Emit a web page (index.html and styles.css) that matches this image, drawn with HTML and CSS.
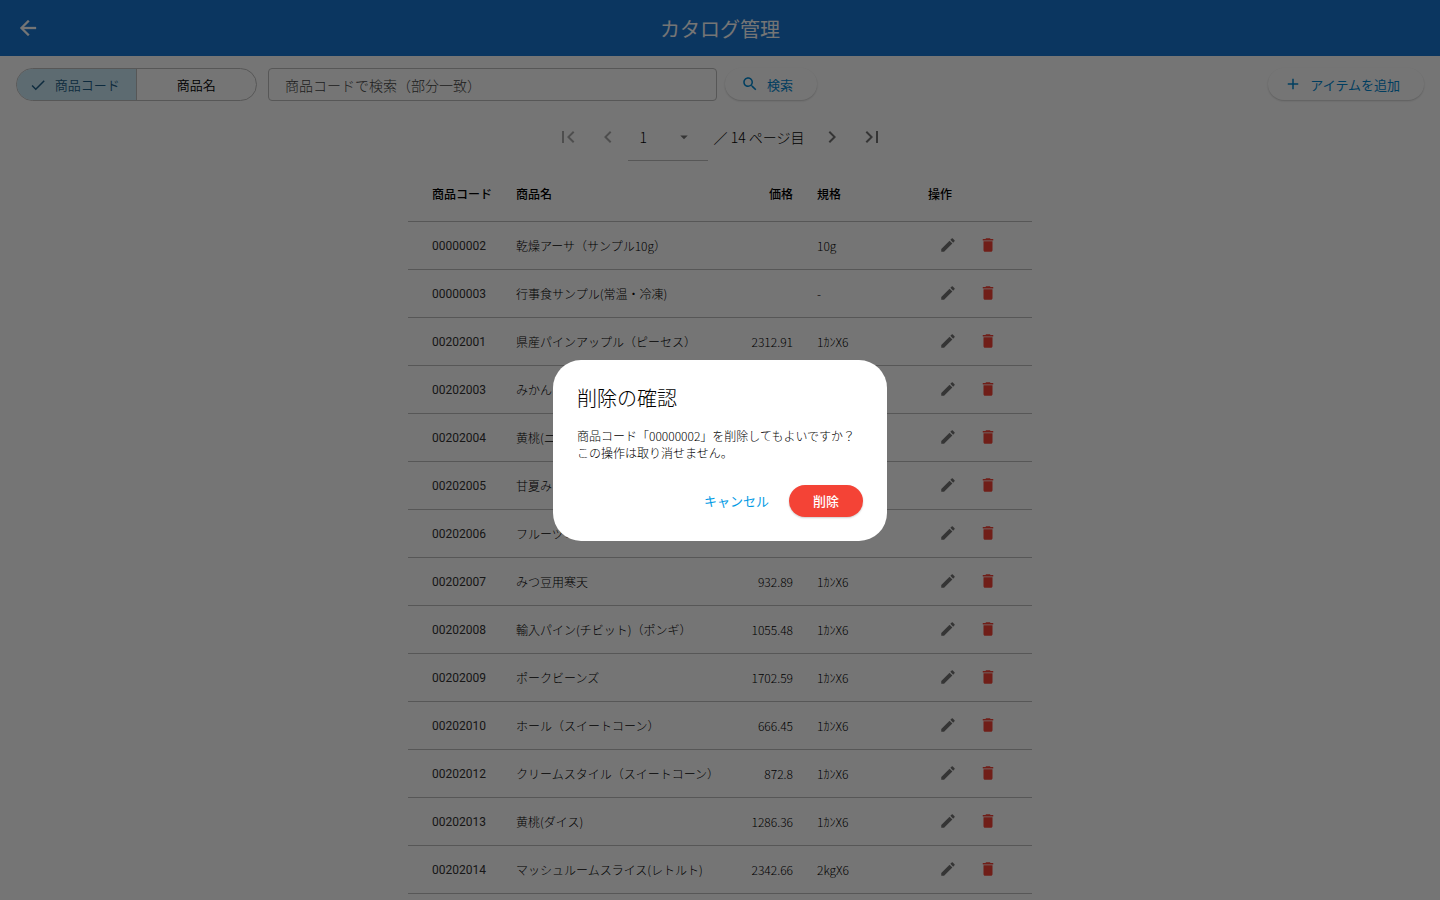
FILE: index.html
```html
<!DOCTYPE html>
<html lang="ja">
<head>
<meta charset="utf-8">
<meta name="viewport" content="width=device-width, initial-scale=1">
<title>カタログ管理</title>
<link rel="stylesheet" href="styles.css">
</head>
<body>
<svg class="sprite" aria-hidden="true">
  <symbol id="back" viewBox="0 0 24 24"><path d="M20 11H7.83l5.59-5.59L12 4l-8 8 8 8 1.41-1.41L7.83 13H20v-2z" stroke="currentColor" stroke-width=".3"/></symbol>
  <symbol id="check" viewBox="0 0 24 24"><path d="M9 16.17 4.83 12l-1.42 1.41L9 19 21 7l-1.41-1.41z"/></symbol>
  <symbol id="search" viewBox="0 0 24 24"><path d="M15.5 14h-.79l-.28-.27C15.41 12.59 16 11.11 16 9.5 16 5.91 13.09 3 9.5 3S3 5.91 3 9.5 5.91 16 9.5 16c1.61 0 3.09-.59 4.23-1.57l.27.28v.79l5 4.99L20.49 19l-4.99-5zm-6 0C7.01 14 5 11.99 5 9.5S7.01 5 9.5 5 14 7.01 14 9.5 11.99 14 9.5 14z"/></symbol>
  <symbol id="add" viewBox="0 0 24 24"><path d="M19 13h-6v6h-2v-6H5v-2h6V5h2v6h6v2z"/></symbol>
  <symbol id="first" viewBox="0 0 24 24"><path d="M18.41 16.59 13.82 12l4.59-4.59L17 6l-6 6 6 6zM6 6h2v12H6z"/></symbol>
  <symbol id="prev" viewBox="0 0 24 24"><path d="M15.41 7.41 14 6l-6 6 6 6 1.41-1.41L10.83 12z"/></symbol>
  <symbol id="next" viewBox="0 0 24 24"><path d="M10 6 8.59 7.41 13.17 12l-4.58 4.59L10 18l6-6z"/></symbol>
  <symbol id="last" viewBox="0 0 24 24"><path d="M5.59 7.41 10.18 12l-4.59 4.59L7 18l6-6-6-6zM16 6h2v12h-2z"/></symbol>
  <symbol id="drop" viewBox="0 0 24 24"><path d="m7 10 5 5 5-5z"/></symbol>
  <symbol id="edit" viewBox="0 0 24 24"><path d="M3 17.25V21h3.75L17.81 9.94l-3.75-3.75L3 17.25zM20.71 7.04c.39-.39.39-1.02 0-1.41l-2.34-2.34c-.39-.39-1.02-.39-1.41 0l-1.83 1.83 3.75 3.75 1.83-1.83z"/></symbol>
  <symbol id="trash" viewBox="0 0 24 24"><path d="M6 19c0 1.1.9 2 2 2h8c1.1 0 2-.9 2-2V7H6v12zM19 4h-3.5l-1-1h-5l-1 1H5v2h14V4z"/></symbol>
</svg>

<div class="page">
  <header class="app-bar">
    <button class="icon-btn back" aria-label="戻る"><svg><use href="#back"/></svg></button>
    <h1>カタログ管理</h1>
  </header>

  <div class="toolbar">
    <div class="segments">
      <button class="segment selected" aria-pressed="true"><svg><use href="#check"/></svg>商品コード</button>
      <button class="segment" aria-pressed="false">商品名</button>
    </div>
    <input class="search-box" type="text" aria-label="検索" placeholder="商品コードで検索（部分一致）">
    <button class="pill"><svg><use href="#search"/></svg>検索</button>
    <button class="pill add"><svg><use href="#add"/></svg>アイテムを追加</button>
  </div>

  <nav class="pager" aria-label="ページ">
    <button class="icon-btn" disabled aria-label="最初のページ"><svg><use href="#first"/></svg></button>
    <button class="icon-btn" disabled aria-label="前のページ"><svg><use href="#prev"/></svg></button>
    <div class="page-select">
      <select aria-label="ページ番号"><option>1</option><option>2</option><option>3</option></select>
      <svg><use href="#drop"/></svg>
    </div>
    <span class="total">／ 14 ページ目</span>
    <button class="icon-btn" aria-label="次のページ"><svg><use href="#next"/></svg></button>
    <button class="icon-btn" aria-label="最後のページ"><svg><use href="#last"/></svg></button>
  </nav>

  <table class="catalog">
    <thead>
      <tr><th class="code">商品コード</th><th class="name">商品名</th><th class="price">価格</th><th class="spec">規格</th><th class="ops">操作</th></tr>
    </thead>
    <tbody id="rows"></tbody>
  </table>
</div>

<div class="scrim">
  <div class="dialog" role="dialog" aria-modal="true" aria-labelledby="dialog-title">
    <h2 id="dialog-title">削除の確認</h2>
    <p>商品コード「00000002」を削除してもよいですか？<br>この操作は取り消せません。</p>
    <div class="actions">
      <button class="cancel">キャンセル</button>
      <button class="danger">削除</button>
    </div>
  </div>
</div>
<script src="app.js"></script>
</body>
</html>
```
FILE: styles.css
```css
* { box-sizing: border-box; }

body {
  margin: 0;
  background: #fff;
  color: #000;
  font: 300 12px/17px "Noto Sans CJK JP", "Noto Sans", sans-serif;
}

button, input, select { font: inherit; color: inherit; }

button {
  display: inline-flex;
  align-items: center;
  justify-content: center;
  padding: 0;
  border: 0;
  background: none;
  cursor: pointer;
}

svg { width: 18px; height: 18px; fill: currentColor; flex: none; }

.sprite { position: absolute; width: 0; height: 0; }

.page { height: 100vh; overflow: hidden; }

.app-bar {
  display: grid;
  grid-template-columns: 56px 1fr 56px;
  align-items: center;
  height: 56px;
  background: #1976d2;
  color: #fff;
}

.app-bar h1 {
  margin: 2px 0 0;
  text-align: center;
  font-size: 20px;
  line-height: 28px;
  font-weight: 400;
}

.icon-btn { width: 40px; height: 40px; color: #757575; }
.icon-btn:disabled { color: #ababab; }
.icon-btn svg { width: 24px; height: 24px; }
.icon-btn.back { color: #fff; margin: 0 auto; }

.toolbar { display: flex; align-items: flex-start; padding: 12px 16px 0; }

.segments {
  display: grid;
  grid-template-columns: 1fr 1fr;
  width: 241px;
  height: 33px;
  margin-right: 11px;
  border: 1px solid #bdbdbd;
  border-radius: 17px;
  overflow: hidden;
}

.segment { gap: 8px; font-size: 13px; font-weight: 350; }
.segment svg { width: 18px; height: 18px; }
.segment.selected {
  padding-right: 4px;
  border-right: 1px solid #bdbdbd;
  background: #cbe9f7;
  color: #1f5f88;
}

.search-box {
  flex: 0 1 449px;
  min-width: 0;
  height: 33px;
  margin-right: 8px;
  padding: 0 16px;
  border: 1px solid #bdbdbd;
  border-radius: 4px;
  background: #fff;
  font-size: 14px;
}
.search-box::placeholder { color: #444; opacity: 1; }

.pill {
  gap: 8px;
  height: 32px;
  padding: 0 24px 0 16px;
  border-radius: 16px;
  background: #fff;
  color: #0288d1;
  font-size: 13px;
  font-weight: 400;
  box-shadow: 0 1px 2px rgba(0, 0, 0, .2);
}
.pill.add { margin-left: auto; }

.pager { display: flex; justify-content: center; align-items: center; margin-top: 12px; height: 48px; }
.pager .icon-btn { height: 48px; }

.page-select { display: flex; align-items: center; position: relative; width: 80px; height: 48px; border-bottom: 1px solid #bdbdbd; }
.page-select select {
  appearance: none;
  width: 100%;
  height: 100%;
  padding: 2px 32px 0 12px;
  border: 0;
  background: none;
  font-size: 14px;
}
.page-select svg { position: absolute; right: 12px; top: 15px; width: 24px; color: #757575; pointer-events: none; }

.total { margin: 0 8px 0 6px; font-size: 14px; line-height: 20px; }

.catalog { width: 624px; max-width: 100%; margin: 5px auto 0; table-layout: fixed; border-collapse: separate; border-spacing: 0; }
.catalog th { height: 56px; font-weight: 500; }
.catalog td { height: 48px; }
.catalog th, .catalog td { padding: 0 0 0 24px; border-bottom: 1px solid #bdbdbd; text-align: left; white-space: nowrap; }
.catalog .code { width: 84px; }
.catalog td.code { padding-top: 2px; color: #333; font-family: Roboto, sans-serif; font-weight: 400; }
.catalog .name { width: 212px; }
.catalog .price { width: 89px; text-align: right; }
.catalog .spec { width: 111px; }
.catalog .ops { width: 128px; }
.catalog .tools { display: flex; padding-bottom: 2px; }
.catalog .icon-btn svg { width: 18px; height: 18px; }
.catalog .delete { color: #f44336; }

.scrim {
  position: fixed;
  inset: 0;
  display: flex;
  align-items: center;
  justify-content: center;
  background: rgba(0, 0, 0, .54);
}

.dialog { padding: 24px; border-radius: 28px; background: #fff; }
.dialog h2 { margin: 0 0 15px; font-size: 20px; line-height: 28px; font-weight: 300; }
.dialog p { margin: 0; min-width: 286px; }
.actions { display: flex; justify-content: flex-end; gap: 8px; margin-top: 24px; }
.actions button { height: 32px; border-radius: 16px; font-size: 13px; }
.cancel { padding: 0 12px; color: #039be5; font-weight: 400; }
.danger { padding: 0 24px; background: #f44336; color: #fff; font-weight: 500; box-shadow: 0 1px 2px rgba(0, 0, 0, .2); }
```
FILE: app.js
```js
const items = [
  ["00000002", "乾燥アーサ（サンプル10g）", "", "10g"],
  ["00000003", "行事食サンプル(常温・冷凍)", "", "-"],
  ["00202001", "県産パインアップル（ピーセス）", "2312.91", "1ｶﾝX6"],
  ["00202003", "みかん", "", ""],
  ["00202004", "黄桃(ニ", "", ""],
  ["00202005", "甘夏み", "", ""],
  ["00202006", "フルーツミ", "", ""],
  ["00202007", "みつ豆用寒天", "932.89", "1ｶﾝX6"],
  ["00202008", "輸入パイン(チビット)（ポンギ）", "1055.48", "1ｶﾝX6"],
  ["00202009", "ポークビーンズ", "1702.59", "1ｶﾝX6"],
  ["00202010", "ホール（スイートコーン）", "666.45", "1ｶﾝX6"],
  ["00202012", "クリームスタイル（スイートコーン）", "872.8", "1ｶﾝX6"],
  ["00202013", "黄桃(ダイス)", "1286.36", "1ｶﾝX6"],
  ["00202014", "マッシュルームスライス(レトルト)", "2342.66", "2kgX6"]
];

document.getElementById("rows").innerHTML = items.map(([code, name, price, spec]) => `
  <tr>
    <td class="code">${code}</td>
    <td class="name">${name}</td>
    <td class="price">${price}</td>
    <td class="spec">${spec}</td>
    <td class="ops"><div class="tools">
      <button class="icon-btn" aria-label="編集"><svg><use href="#edit"/></svg></button>
      <button class="icon-btn delete" aria-label="削除"><svg><use href="#trash"/></svg></button>
    </div></td>
  </tr>`).join("");
```
